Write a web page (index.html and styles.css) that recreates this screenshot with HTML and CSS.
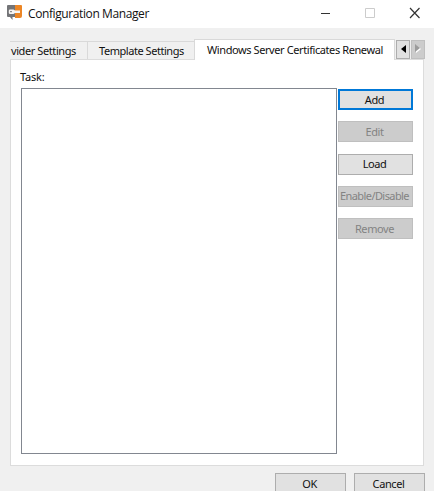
FILE: index.html
```
<!DOCTYPE html>
<html lang="en">
<head>
<meta charset="utf-8">
<title>Configuration Manager</title>
<link rel="stylesheet" href="styles.css">
</head>
<body>
<div class="window">
  <header class="titlebar">
    <svg class="logo" width="17" height="16" viewBox="0 0 17 16">
      <path d="M1 0h7v12H5.500v3L3 12H1q-1 0-1-1V1q0-1 1-1z" fill="#737477"/>
      <path d="M8 0h6q1 0 1 1v10q0 2-2 2H8z" fill="#ec8625"/>
      <path d="M2.500 4.500h4L8 5.500h5v2.500H8L6.500 9h-4L1.800 8V5.500z" fill="#f7f5f3"/>
      <path d="M3 6.700h2" stroke="#77787a"/>
    </svg>
    <h1 class="title">Configuration Manager</h1>
    <svg class="controls" width="104" height="14" viewBox="0 0 104 14" fill="none">
      <path d="M1 6.500h9" stroke="#333"/>
      <path d="M45.500 1.500h9v9h-9z" stroke="#ccc"/>
      <path d="M90 1l9.500 10M99.500 1L90 11" stroke="#333" stroke-width="1.200"/>
    </svg>
  </header>
  <main class="content">
    <nav class="tabs">
      <div class="tab tab-provider"><span>vider Settings</span></div>
      <div class="tab tab-template"><span>Template Settings</span></div>
      <div class="tab tab-active"><span>Windows Server Certificates Renewal</span></div>
      <div class="arrows">
        <button class="arrow" aria-label="Scroll left"><svg width="5" height="8" viewBox="0 0 5 8"><path d="M5 0v8L0 4z" fill="#000"/></svg></button>
        <button class="arrow disabled" aria-label="Scroll right"><svg width="6" height="9" viewBox="0 0 6 9"><path d="M1 1v8l5-4z" fill="#fff"/><path d="M0 0v8l5-4z" fill="#9b9b9b"/></svg></button>
      </div>
    </nav>
    <section class="panel">
      <div class="label">Task:</div>
      <div class="task-area">
        <div class="list"></div>
        <div class="actions">
          <button class="btn focus">Add</button>
          <button class="btn disabled">Edit</button>
          <button class="btn">Load</button>
          <button class="btn disabled wide">Enable/Disable</button>
          <button class="btn disabled">Remove</button>
        </div>
      </div>
    </section>
    <footer class="footer">
      <button class="btn">OK</button>
      <button class="btn">Cancel</button>
    </footer>
  </main>
</div>
</body>
</html>
```
FILE: styles.css
```
* { box-sizing: border-box; }
body {
  margin: 0;
  overflow: hidden;
  background: #f0f0f0;
  color: #111;
  font-family: "Noto Sans", "Liberation Sans", sans-serif;
  font-size: 11px;
  letter-spacing: -0.41px;
}
.window { height: 491px; overflow: hidden; }
.titlebar {
  display: flex;
  align-items: flex-start;
  height: 28px;
  padding: 5px 10px 0 7px;
  background: #fff;
}
.title {
  margin: 0 0 0 4px;
  font: 400 12px/18px "Open Sans", sans-serif;
  letter-spacing: -0.4px;
  white-space: nowrap;
}
.controls { margin: 2px 0 0 auto; }
.content { padding: 11px 9px 0 10px; }
.tabs {
  display: flex;
  align-items: flex-end;
  height: 20px;
}
.tab {
  flex: none;
  height: 18px;
  border-top: 1px solid #d9d9d9;
  line-height: 18px;
  white-space: nowrap;
}
.tab-provider { width: 78px; padding-left: 1px; border-right: 1px solid #d9d9d9; }
.tab-template { width: 106px; padding-left: 11px; letter-spacing: -0.45px; }
.tab-active {
  position: relative;
  width: 201px;
  height: 21px;
  margin-bottom: -1px;
  padding-left: 12px;
  border: 1px solid #d9d9d9;
  border-bottom: 0;
  background: #fff;
  line-height: 20px;
}
.arrows {
  display: flex;
  gap: 1px;
  align-self: flex-start;
  margin: 1px 0 0 1px;
}
.arrow {
  display: flex;
  align-items: center;
  justify-content: center;
  width: 14px;
  height: 19px;
  padding: 0 0 2px;
  border: 1px solid #adadad;
  background: #e1e1e1;
}
.arrow.disabled { background: #ccc; border-color: #bfbfbf; }
.panel {
  height: 407px;
  width: 414px;
  padding: 8px 10px 0;
  border: 1px solid #dcdcdc;
  background: #fff;
}
.label { height: 20px; margin-left: -1px; line-height: 17px; letter-spacing: -0.2px; }
.task-area { display: flex; gap: 1px; }
.list {
  flex: none;
  width: 316px;
  height: 366px;
  border: 1px solid #828790;
}
.actions {
  display: flex;
  flex-direction: column;
  gap: 11.300px;
  padding-top: 1px;
}
.btn {
  width: 75px;
  height: 21px;
  padding: 0 2px 0 0;
  border: 1px solid #adadad;
  background: #e1e1e1;
  color: #111;
  font: inherit;
  line-height: 18px;
  letter-spacing: -0.41px;
  white-space: nowrap;
}
.btn.focus { border: 2px solid #0078d7; line-height: 16px; }
.btn.disabled { background: #ccc; border-color: #bfbfbf; color: #838383; }
.btn.wide { letter-spacing: -0.58px; }
.footer {
  display: flex;
  justify-content: flex-end;
  gap: 8px;
  padding-top: 7px;
}
.footer .btn { width: 71px; }
```
